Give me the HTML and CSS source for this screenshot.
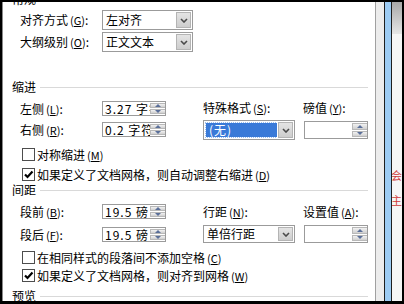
FILE: index.html
```html
<!DOCTYPE html>
<html lang="zh-CN">
<head>
    <meta charset="UTF-8">
    <title>段落</title>
    <link rel="stylesheet" href="styles.css">
</head>
<body>
<div class="screen">
    <div class="dialog">
        <!-- 常规 -->
        <div class="group-title cut-top"><span>常规</span></div>
        <div class="field-row first">
            <span class="label">对齐方式<span class="key">(<u>G</u>)</span>:</span>
            <div class="combo wide">
                <span class="combo-text">左对齐</span>
                <span class="combo-btn"><svg width="8" height="5" viewBox="0 0 8 5"><path d="M1 1 L4 4 L7 1" fill="none" stroke="#4a4a4a" stroke-width="1.6"/></svg></span>
            </div>
        </div>
        <div class="field-row second">
            <span class="label">大纲级别<span class="key">(<u>O</u>)</span>:</span>
            <div class="combo wide">
                <span class="combo-text">正文文本</span>
                <span class="combo-btn"><svg width="8" height="5" viewBox="0 0 8 5"><path d="M1 1 L4 4 L7 1" fill="none" stroke="#4a4a4a" stroke-width="1.6"/></svg></span>
            </div>
        </div>

        <!-- 缩进 -->
        <div class="group-title indent-title"><span>缩进</span></div>
        <div class="grid-block indent-block">
            <div class="col-left">
                <div class="spin-row top">
                    <span class="label">左侧<span class="key">(<u>L</u>)</span>:</span>
                    <div class="spin"><span class="spin-text">3.27 字符</span><span class="spin-btns"><i class="up"></i><i class="down"></i></span></div>
                </div>
                <div class="spin-row next">
                    <span class="label">右侧<span class="key">(<u>R</u>)</span>:</span>
                    <div class="spin"><span class="spin-text">0.2 字符</span><span class="spin-btns"><i class="up"></i><i class="down"></i></span></div>
                </div>
            </div>
            <div class="col-special">
                <div class="col-label">特殊格式<span class="key">(<u>S</u>)</span>:</div>
                <div class="combo tall">
                    <span class="combo-text"><span class="selected">(无)</span></span>
                    <span class="combo-btn"><svg width="8" height="5" viewBox="0 0 8 5"><path d="M1 1 L4 4 L7 1" fill="none" stroke="#4a4a4a" stroke-width="1.6"/></svg></span>
                </div>
            </div>
            <div class="col-value">
                <div class="col-label">磅值<span class="key">(<u>Y</u>)</span>:</div>
                <div class="spin big"><span class="spin-text"></span><span class="spin-btns"><i class="up"></i><i class="down"></i></span></div>
            </div>
        </div>
        <div class="check-row c1">
            <span class="box"></span><span>对称缩进<span class="key">(<u>M</u>)</span></span>
        </div>
        <div class="check-row c2">
            <span class="box"><svg width="11" height="11" viewBox="0 0 11 11"><path d="M2 5.5 L4.5 8 L9.5 2.5" fill="none" stroke="#000" stroke-width="2.2"/></svg></span><span>如果定义了文档网格，则自动调整右缩进<span class="key">(<u>D</u>)</span></span>
        </div>

        <!-- 间距 -->
        <div class="group-title spacing-title"><span>间距</span></div>
        <div class="grid-block spacing-block">
            <div class="col-left">
                <div class="spin-row top">
                    <span class="label">段前<span class="key">(<u>B</u>)</span>:</span>
                    <div class="spin"><span class="spin-text">19.5 磅</span><span class="spin-btns"><i class="up"></i><i class="down"></i></span></div>
                </div>
                <div class="spin-row later">
                    <span class="label">段后<span class="key">(<u>F</u>)</span>:</span>
                    <div class="spin"><span class="spin-text">19.5 磅</span><span class="spin-btns"><i class="up"></i><i class="down"></i></span></div>
                </div>
            </div>
            <div class="col-special">
                <div class="col-label low">行距<span class="key">(<u>N</u>)</span>:</div>
                <div class="combo short">
                    <span class="combo-text">单倍行距</span>
                    <span class="combo-btn"><svg width="8" height="5" viewBox="0 0 8 5"><path d="M1 1 L4 4 L7 1" fill="none" stroke="#4a4a4a" stroke-width="1.6"/></svg></span>
                </div>
            </div>
            <div class="col-value">
                <div class="col-label low">设置值<span class="key">(<u>A</u>)</span>:</div>
                <div class="spin big low"><span class="spin-text"></span><span class="spin-btns"><i class="up"></i><i class="down"></i></span></div>
            </div>
        </div>
        <div class="check-row c3">
            <span class="box"></span><span>在相同样式的段落间不添加空格<span class="key">(<u>C</u>)</span></span>
        </div>
        <div class="check-row c4">
            <span class="box"><svg width="11" height="11" viewBox="0 0 11 11"><path d="M2 5.5 L4.5 8 L9.5 2.5" fill="none" stroke="#000" stroke-width="2.2"/></svg></span><span>如果定义了文档网格，则对齐到网格<span class="key">(<u>W</u>)</span></span>
        </div>

        <!-- 预览 -->
        <div class="group-title preview-title"><span>预览</span></div>
    </div>
    <div class="gutter"></div>
    <div class="page-edge"></div>
    <div class="page">
        <div class="mark first">会</div>
        <div class="mark">主</div>
    </div>
</div>
</body>
</html>
```

FILE: styles.css
```css
body {
    margin: 0;
    background: #000;
}
.screen {
    width: 404px;
    height: 304px;
    box-sizing: border-box;
    border-style: solid;
    border-color: #000;
    border-width: 2px 2px 3px 2px;
    display: flex;
    overflow: hidden;
    background: #fff;
}
.dialog {
    width: 372px;
    flex: none;
    border-left: 1px solid #8a8a8a;
    border-right: 1px solid #a0a0a0;
    background: #fff;
    overflow: hidden;
    font: 12px/12px "Noto Sans CJK SC", "Noto Sans", sans-serif;
    color: #000;
}
u {
    text-decoration: underline;
    text-underline-offset: 1px;
    text-decoration-thickness: 1px;
}
.key {
    margin-left: 2px;
    font-size: 11px;
}
/* group titles with rule */
.group-title {
    display: flex;
    align-items: center;
    height: 12px;
    padding-left: 9px;
    white-space: nowrap;
}
.group-title::after {
    content: "";
    flex: 1;
    height: 1px;
    background: #d9d9d9;
    margin: 1px 7px 0 4px;
}
.cut-top { margin-top: -9px; }
.indent-title { margin-top: 29px; }
.spacing-title { margin-top: 3px; }
.preview-title { margin-top: 8px; }

/* top rows */
.field-row {
    display: flex;
    align-items: center;
    height: 20px;
    padding-left: 17px;
}
.field-row.first { margin-top: 5px; }
.field-row.second { margin-top: 2px; }
.label {
    width: 82px;
    flex: none;
    white-space: nowrap;
}

/* combo box */
.combo {
    display: flex;
    box-sizing: border-box;
    height: 20px;
    border: 1px solid #9b9b9b;
    background: #fff;
}
.combo.wide { width: 91px; }
.combo.tall { width: 92px; margin-top: 6px; }
.combo.short { width: 92px; height: 18px; margin-top: 7px; }
.combo-text {
    flex: 1;
    display: flex;
    align-items: center;
    padding-left: 3px;
    overflow: hidden;
    white-space: nowrap;
}
.combo-btn {
    width: 15px;
    margin: 1px;
    background: linear-gradient(#e4e4e4, #cdcdcd);
    border: 1px solid #b4b4b4;
    box-sizing: border-box;
    display: flex;
    align-items: center;
    justify-content: center;
}
.selected {
    display: block;
    width: 70px;
    height: 14px;
    line-height: 14px;
    margin-left: -1px;
    padding-left: 3px;
    background: #3a7ad8;
    color: #fff;
    letter-spacing: 1px;
    outline: 1px dotted #9cc0f0;
}

/* indent / spacing blocks */
.grid-block {
    display: flex;
}
.indent-block { margin-top: 7px; height: 41px; }
.spacing-block { margin-top: 7px; height: 40px; }
.col-left {
    width: 146px;
    padding-left: 17px;
    flex: none;
}
.col-special {
    width: 92px;
    margin-left: 37px;
    flex: none;
}
.col-value {
    width: 65px;
    margin-left: 8px;
    flex: none;
}
.col-label {
    margin-top: 2px;
    white-space: nowrap;
}
.col-label.low { margin-top: 3px; }
.spin-row {
    display: flex;
    align-items: center;
    height: 15px;
}
.spin-row.top { margin-top: 1px; }
.spin-row.next { margin-top: 6px; }
.spin-row.later { margin-top: 8px; }

/* spin box */
.spin {
    display: flex;
    box-sizing: border-box;
    width: 64px;
    height: 15px;
    border: 1px solid #9b9b9b;
    background: #fff;
}
.spin.big {
    height: 18px;
    margin-left: 1px;
    margin-top: 7px;
}
.spin.big.low { margin-top: 7px; }
.spin-text {
    flex: 1;
    overflow: hidden;
    white-space: nowrap;
    padding-left: 2px;
    line-height: 13px;
    letter-spacing: 1px;
}
.spin-btns {
    width: 15px;
    display: flex;
    flex-direction: column;
    gap: 1px;
    padding: 1px 0 1px 0;
    box-sizing: border-box;
}
.spin-btns i {
    flex: 1;
    display: flex;
    align-items: center;
    justify-content: center;
    background: linear-gradient(#f2f2f2, #cfcfcf);
    border: 1px solid #b8b8b8;
    border-right: none;
}
.spin-btns i::after {
    content: "";
    border-left: 3px solid transparent;
    border-right: 3px solid transparent;
}
.spin-btns .up::after { border-bottom: 3px solid #5a6f99; }
.spin-btns .down::after { border-top: 3px solid #5a6f99; }

/* check rows */
.check-row {
    display: flex;
    align-items: center;
    height: 13px;
    padding-left: 19px;
    white-space: nowrap;
}
.check-row .box {
    width: 13px;
    height: 13px;
    box-sizing: border-box;
    border: 1px solid #4d4d4d;
    background: #fff;
    margin-right: 2px;
    display: flex;
    align-items: center;
    justify-content: center;
    flex: none;
}
.check-row.c1 { margin-top: 7px; }
.check-row.c2 { margin-top: 7px; }
.check-row.c3 { margin-top: 8px; }
.check-row.c4 { margin-top: 5px; }

/* document edge on the right */
.gutter {
    width: 8px;
    flex: none;
    background: #ececec;
}
.page-edge {
    width: 6px;
    flex: none;
    background: #9ccbf3;
    border-left: 1px solid #1e1e1e;
    border-right: 1px solid #1e1e1e;
}
.page {
    width: 10px;
    flex: none;
    overflow: hidden;
    background: linear-gradient(#a8a8a8, #e6e6e6) top / 100% 32px no-repeat, #f6f6f6;
    font: 11px/12px "Noto Sans CJK SC", sans-serif;
    color: #d03a3a;
}
.mark {
    margin-top: 13px;
    margin-left: -1px;
}
.mark.first { margin-top: 167px; }
```
